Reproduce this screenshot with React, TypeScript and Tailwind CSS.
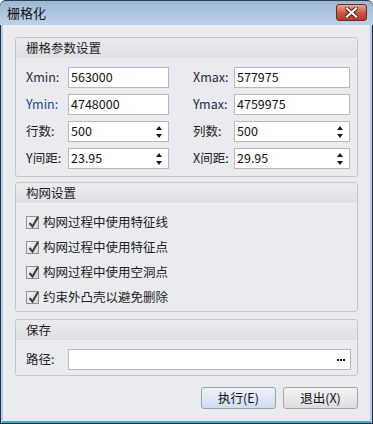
import React from "react";

const font = { fontFamily: '"Noto Sans CJK SC", "Noto Sans", sans-serif' };

function Spin() {
  return (
    <div className="absolute right-[6px] top-0 bottom-0 flex flex-col justify-center gap-[4px]">
      <svg width="6" height="4" viewBox="0 0 6 4"><path d="M0 4 L3 0 L6 4 Z" fill="#1a1a1a" /></svg>
      <svg width="6" height="4" viewBox="0 0 6 4"><path d="M0 0 L3 4 L6 0 Z" fill="#1a1a1a" /></svg>
    </div>
  );
}

function Input({ value, w, spin }: { value: string; w: string; spin?: boolean }) {
  return (
    <div className={`relative h-[21px] ${w} bg-white border border-[#b4b8bf] flex items-center pl-[2px] text-[12.5px] text-[#111]`}>
      {value}
      {spin && <Spin />}
    </div>
  );
}

function Header({ children }: { children: React.ReactNode }) {
  return (
    <div className="h-[21px] flex items-center pl-[10px] text-[12.5px] text-[#1e1e1e] bg-gradient-to-b from-[#e9ebee] to-[#dfe1e5] border-b border-[#eef0f3] rounded-t-[2px]">
      {children}
    </div>
  );
}

function Check({ label }: { label: string }) {
  return (
    <div className="h-[25px] flex items-center">
      <div className="relative w-[13px] h-[13px] border border-[#8f9194] bg-gradient-to-br from-[#f4f4f4] to-[#d6d7d9]">
        <svg className="absolute left-[1px] top-[-1px]" width="12" height="13" viewBox="0 0 12 13">
          <path d="M1.5 7 L4.5 10.5 L10 1" stroke="#3b3b3b" strokeWidth="2" fill="none" />
        </svg>
      </div>
      <span className="ml-[4px] text-[12.5px] text-[#222]">{label}</span>
    </div>
  );
}

export default function App() {
  return (
    <div style={font} className="w-[373px] h-[424px] bg-[#1f3145] p-[1px] pt-0 flex flex-col rounded-t-[6px] overflow-hidden">
      <div className="h-[25px] flex items-center justify-between bg-gradient-to-b from-[#9eb7d4] to-[#bcd2ea] border-t border-[#2c4058] rounded-t-[6px] -mx-[1px] px-[1px]">
        <span className="ml-[6px] text-[13px] text-[#111]">栅格化</span>
        <div className="mr-[5px] mt-[-2px] w-[31px] h-[17px] rounded-[3px] border border-[#6e2b22] bg-gradient-to-b from-[#e9a597] via-[#cd5a45] to-[#b9381f] flex items-center justify-center">
          <svg width="13" height="11" viewBox="0 0 13 11">
            <path d="M2 1.5 L11 9.5 M11 1.5 L2 9.5" stroke="#4a1a14" strokeWidth="4" strokeLinecap="square" />
            <path d="M2 1.5 L11 9.5 M11 1.5 L2 9.5" stroke="#ffffff" strokeWidth="2.2" strokeLinecap="square" />
          </svg>
        </div>
      </div>
      <div className="flex-1 border-l-2 border-r-2 border-b-[2px] border-[#b4cde8] border-b-[#3fa9c9] bg-[#e9ebef] px-[12px] pt-[12px] flex flex-col">
        {/* Group 1 */}
        <div className="border border-[#c4c8ce] rounded-[3px] flex flex-col">
          <Header>栅格参数设置</Header>
          <div className="pl-[10px] pr-[5px] pt-[8px] pb-[7px] flex flex-col gap-[6px]">
            <div className="flex items-center">
              <span className="w-[42px] text-[12.5px] text-[#1e2b45]">Xmin:</span>
              <Input value="563000" w="w-[101px]" />
              <span className="ml-[24px] w-[41px] text-[12.5px] text-[#1e2b45]">Xmax:</span>
              <Input value="577975" w="w-[116px]" />
            </div>
            <div className="flex items-center">
              <span className="w-[42px] text-[12.5px] text-[#1d4a8c]">Ymin:</span>
              <Input value="4748000" w="w-[101px]" />
              <span className="ml-[24px] w-[41px] text-[12.5px] text-[#1e2b45]">Ymax:</span>
              <Input value="4759975" w="w-[116px]" />
            </div>
            <div className="flex items-center">
              <span className="w-[42px] text-[12.5px] text-[#222]">行数:</span>
              <Input value="500" w="w-[101px]" spin />
              <span className="ml-[24px] w-[41px] text-[12.5px] text-[#222]">列数:</span>
              <Input value="500" w="w-[116px]" spin />
            </div>
            <div className="flex items-center">
              <span className="w-[42px] text-[12.5px] text-[#222]">Y间距:</span>
              <Input value="23.95" w="w-[101px]" spin />
              <span className="ml-[24px] w-[41px] text-[12.5px] text-[#222]">X间距:</span>
              <Input value="29.95" w="w-[116px]" spin />
            </div>
          </div>
        </div>
        {/* Group 2 */}
        <div className="mt-[5px] border border-[#c4c8ce] rounded-[3px] flex flex-col">
          <Header>构网设置</Header>
          <div className="pl-[10px] pt-[6px] pb-[1px] flex flex-col">
            <Check label="构网过程中使用特征线" />
            <Check label="构网过程中使用特征点" />
            <Check label="构网过程中使用空洞点" />
            <Check label="约束外凸壳以避免删除" />
          </div>
        </div>
        {/* Group 3 */}
        <div className="mt-[7px] border border-[#c4c8ce] rounded-[3px] flex flex-col">
          <Header>保存</Header>
          <div className="pl-[10px] pr-[5px] pt-[8px] pb-[5px] flex items-center">
            <span className="w-[42px] text-[12.5px] text-[#222]">路径:</span>
            <div className="relative h-[21px] w-[283px] bg-white border border-[#b4b8bf] flex items-center justify-end pr-[5px] gap-[1px]">
              <div className="w-[2px] h-[2px] bg-[#111]" />
              <div className="w-[2px] h-[2px] bg-[#111]" />
              <div className="w-[2px] h-[2px] bg-[#111]" />
            </div>
          </div>
        </div>
        {/* Buttons */}
        <div className="mt-[11px] flex justify-end gap-[7px]">
          <div className="w-[75px] h-[22px] rounded-[3px] border border-[#9aa3ae] bg-gradient-to-b from-[#eef3fb] to-[#cfdcf0] flex items-center justify-center text-[12.5px] text-[#111]">执行(E)</div>
          <div className="w-[75px] h-[22px] rounded-[3px] border border-[#a3a7ad] bg-gradient-to-b from-[#f4f4f5] to-[#dcdde0] flex items-center justify-center text-[12.5px] text-[#111]">退出(X)</div>
        </div>
      </div>
    </div>
  );
}
